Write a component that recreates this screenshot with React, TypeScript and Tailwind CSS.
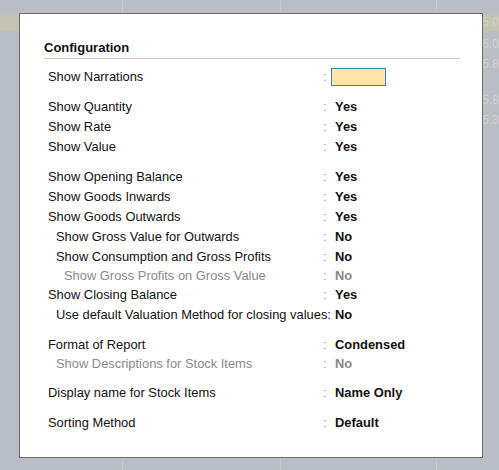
import React from "react";

type Row = {
  label: string;
  value?: string;
  indent?: 0 | 1 | 2;
  muted?: boolean;
  input?: boolean;
  inlineColon?: boolean;
  h?: string;
};

const GROUPS: Row[][] = [
  [{ label: "Show Narrations", input: true }],
  [
    { label: "Show Quantity", value: "Yes" },
    { label: "Show Rate", value: "Yes" },
    { label: "Show Value", value: "Yes" },
  ],
  [
    { label: "Show Opening Balance", value: "Yes" },
    { label: "Show Goods Inwards", value: "Yes" },
    { label: "Show Goods Outwards", value: "Yes" },
    { label: "Show Gross Value for Outwards", value: "No", indent: 1 },
    { label: "Show Consumption and Gross Profits", value: "No", indent: 1, h: "h-[19px]" },
    { label: "Show Gross Profits on Gross Value", value: "No", indent: 2, muted: true, h: "h-[19px]" },
    { label: "Show Closing Balance", value: "Yes", h: "h-[20px]" },
    { label: "Use default Valuation Method for closing values:", value: "No", indent: 1, inlineColon: true },
  ],
  [
    { label: "Format of Report", value: "Condensed", h: "h-[19px]" },
    { label: "Show Descriptions for Stock Items", value: "No", indent: 1, muted: true },
  ],
  [{ label: "Display name for Stock Items", value: "Name Only" }],
  [{ label: "Sorting Method", value: "Default" }],
];

const INDENT = ["pl-0", "pl-2", "pl-4"];
const GAP = ["", "mt-[10px]", "mt-[10px]", "mt-[10px]", "mt-[9px]", "mt-[10px]"];

function ConfigRow({ row }: { row: Row }) {
  const tone = row.muted ? "text-[#8a8a8a]" : "text-[#111]";
  return (
    <div className={`flex items-center ${row.h ?? "h-5"}`}>
      {row.inlineColon ? (
        <div className={`w-[287px] shrink-0 whitespace-nowrap ${INDENT[row.indent ?? 0]} ${tone}`}>
          {row.label}
        </div>
      ) : (
        <>
          <div className={`w-[275px] shrink-0 whitespace-nowrap ${INDENT[row.indent ?? 0]} ${tone}`}>
            {row.label}
          </div>
          <div className="w-[12px] shrink-0 text-[#9a9a9a]">:</div>
        </>
      )}
      {row.input ? (
        <div className="h-[18px] w-[55px] -ml-1 border border-[#3f8796] bg-[#ffe5ab]" />
      ) : (
        <div className={`font-bold ${tone}`}>{row.value}</div>
      )}
    </div>
  );
}

export default function App() {
  return (
    <div
      className="relative h-[470px] w-[499px] overflow-hidden bg-[#b9bec4]"
      style={{ fontFamily: '"Liberation Sans", Arial, sans-serif' }}
    >
      {/* Background report columns */}
      <div className="flex h-full">
        <div className="w-[124px] border-r border-[#c6cacf]">
          <div className="mt-[14px] h-[17px] bg-[#c2c3b2]" />
        </div>
        <div className="w-[159px] border-r border-[#c6cacf]" />
        <div className="w-[157px] border-r border-[#c6cacf]" />
        <div className="flex-1 pt-[14px] pl-[45px] text-[12px] leading-[20px] text-[#ced2d6]">
          <div className="h-[17px] bg-[#c2c3b2] leading-[17px] text-[#d4d4c4]">5.0</div>
          <div className="mt-[3px]">6.0</div>
          <div>5.8</div>
          <div className="mt-[16px]">5.8</div>
          <div>5.3</div>
        </div>
      </div>

      {/* Configuration dialog */}
      <div className="absolute left-[19px] top-[13px] h-[445px] w-[464px] border border-[#6a6a6a] bg-white pl-[24px] pr-[22px] pt-[24px] text-[12.9px]">
        <div className="h-[21px] border-b border-[#c8c8c8] text-[13px] font-bold leading-[20px] text-[#111]">
          Configuration
        </div>
        <div className="pl-[4px] pt-[8px]">
          {GROUPS.map((g, i) => (
            <div key={i} className={GAP[i]}>
              {g.map((r) => (
                <ConfigRow key={r.label} row={r} />
              ))}
            </div>
          ))}
        </div>
      </div>
    </div>
  );
}
